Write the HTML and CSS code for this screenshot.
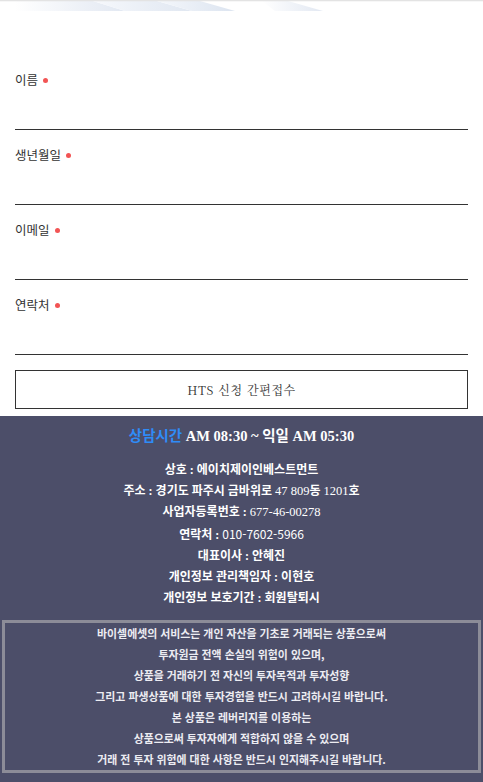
FILE: index.html
```html
<!DOCTYPE html>
<html lang="ko">
<head>
<meta charset="utf-8">
<link rel="stylesheet" href="styles.css">
</head>
<body>
<div class="top-deco">
  <svg width="483" height="11" viewBox="0 0 483 11" aria-hidden="true">
    <defs>
      <linearGradient id="g1" x1="0" x2="1" y1="0" y2="0">
        <stop offset="0" stop-color="#ffffff"/>
        <stop offset="1" stop-color="#e2e8f2"/>
      </linearGradient>
      <linearGradient id="g2" x1="0" x2="1" y1="0" y2="0">
        <stop offset="0" stop-color="#f6f8fc"/>
        <stop offset="1" stop-color="#e0e7f1"/>
      </linearGradient>
      <linearGradient id="g3" x1="0" x2="1" y1="0" y2="0">
        <stop offset="0" stop-color="#f4f7fb"/>
        <stop offset="1" stop-color="#dce4f0"/>
      </linearGradient>
      <linearGradient id="g4" x1="0" x2="1" y1="0" y2="0">
        <stop offset="0" stop-color="#ffffff"/>
        <stop offset="1" stop-color="#e2e8f2"/>
      </linearGradient>
    </defs>
    <polygon points="15,1 93,1 125,11 15,11" fill="url(#g1)"/>
    <polygon points="93,1 157,1 192,11 125,11" fill="url(#g2)"/>
    <polygon points="157,1 200,1 235,11 192,11" fill="url(#g3)"/>
    <polygon points="262,1 288,1 323,11 275,11" fill="url(#g4)"/>
    <rect x="0" y="0" width="483" height="1.3" fill="#e3e3e3"/>
  </svg>
</div>

<form class="form">
  <div class="field">
    <div class="label">이름 <span class="req"></span></div>
    <div class="input"></div>
  </div>
  <div class="field">
    <div class="label">생년월일 <span class="req"></span></div>
    <div class="input"></div>
  </div>
  <div class="field">
    <div class="label">이메일 <span class="req"></span></div>
    <div class="input"></div>
  </div>
  <div class="field">
    <div class="label">연락처 <span class="req"></span></div>
    <div class="input"></div>
  </div>
  <div class="btn">HTS 신청 간편접수</div>
</form>

<footer class="footer">
  <div class="hours"><span class="hours-key">상담시간</span> AM 08:30 ~ 익일 AM 05:30</div>
  <div class="info">
    <p>상호 : 에이치제이인베스트먼트</p>
    <p>주소 : 경기도 파주시 금바위로 <span class="num">47 809</span>동 <span class="num">1201</span>호</p>
    <p>사업자등록번호 : <span class="num">677-46-00278</span></p>
    <p>연락처 : <span class="sans">010-7602-5966</span></p>
    <p>대표이사 : 안혜진</p>
    <p>개인정보 관리책임자 : 이현호</p>
    <p>개인정보 보호기간 : 회원탈퇴시</p>
  </div>
  <div class="notice">
    <p>바이셀에셋의 서비스는 개인 자산을 기초로 거래되는 상품으로써</p>
    <p>투자원금 전액 손실의 위험이 있으며,</p>
    <p>상품을 거래하기 전 자신의 투자목적과 투자성향</p>
    <p>그리고 파생상품에 대한 투자경험을 반드시 고려하시길 바랍니다.</p>
    <p>본 상품은 레버리지를 이용하는</p>
    <p>상품으로써 투자자에게 적합하지 않을 수 있으며</p>
    <p>거래 전 투자 위험에 대한 사항은 반드시 인지해주시길 바랍니다.</p>
  </div>
</footer>
</body>
</html>
```

FILE: styles.css
```css
html, body {
  margin: 0;
  padding: 0;
  background: #ffffff;
}

body {
  font-family: "Noto Sans CJK KR", "Noto Sans", sans-serif;
  color: #333333;
}

.top-deco svg {
  display: block;
}

.form {
  padding: 44px 15px 0;
  margin: 0;
}

.field {
  padding-top: 15px;
}

.label {
  height: 20px;
  line-height: 20px;
  font-size: 12.5px;
  color: #333333;
  display: flex;
  align-items: center;
  gap: 5px;
}

.req {
  display: inline-block;
  width: 5px;
  height: 5px;
  border-radius: 50%;
  background: #f25454;
}

.input {
  height: 39px;
  border-bottom: 1px solid #333333;
}

.btn {
  margin-top: 15px;
  height: 39px;
  box-sizing: border-box;
  border: 1px solid #333333;
  display: flex;
  align-items: center;
  justify-content: center;
  font-family: "Noto Serif CJK KR", "Liberation Serif", "Noto Sans CJK KR", serif;
  font-size: 12px;
  letter-spacing: 0.6px;
  color: #333333;
}

.footer {
  margin-top: 7px;
  background: #4c4e69;
  padding: 7px 0 12px;
  color: #ffffff;
  text-align: center;
}

.hours {
  line-height: 24px;
  font-size: 14.5px;
  font-weight: bold;
  font-family: "Liberation Serif", "Noto Sans CJK KR", serif;
}

.hours-key {
  color: #2f8cf7;
  font-family: "Noto Sans CJK KR", sans-serif;
}

.info {
  margin-top: 12px;
  font-family: "Liberation Serif", "Noto Sans CJK KR", serif;
  font-weight: bold;
  font-size: 12px;
}

.info p,
.notice p {
  margin: 0;
  line-height: 21px;
}

.num {
  font-weight: normal;
  font-size: 12.5px;
}

.sans {
  font-family: "Noto Sans CJK KR", sans-serif;
  font-weight: normal;
}

.notice {
  margin: 11px 2px 0;
  border: 3px solid #8c8c98;
  font-size: 10.9px;
  font-weight: bold;
  color: #ececf2;
}
```
